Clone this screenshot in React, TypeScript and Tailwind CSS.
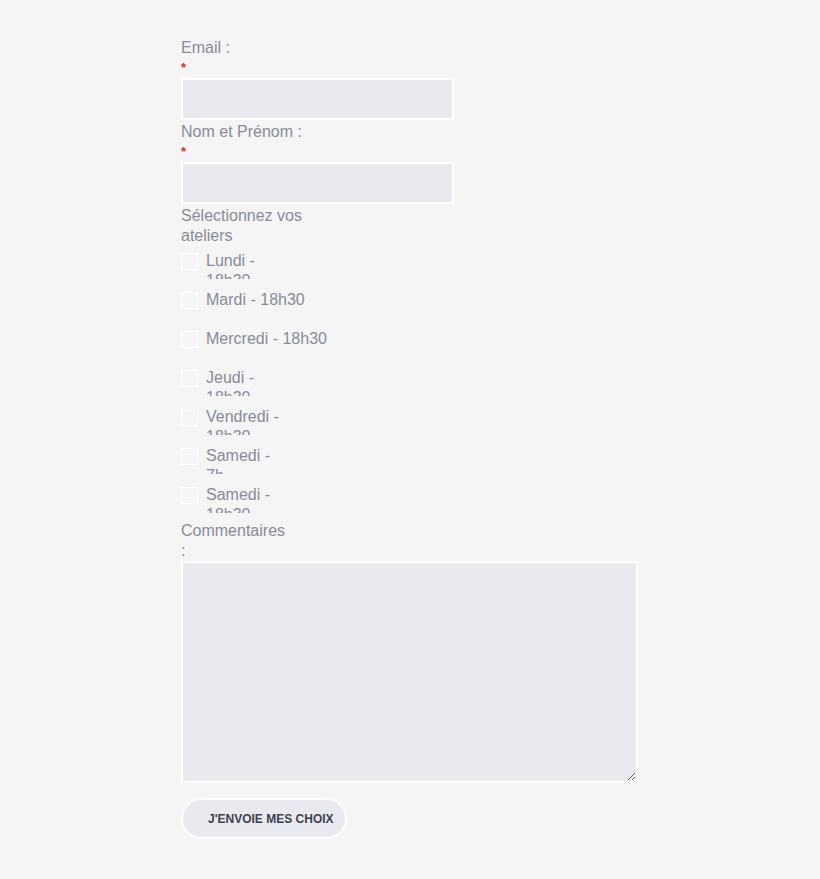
import React from "react";

type Atelier = { id: string; text: string; width: string };

const ateliers: Atelier[] = [
  { id: "lun", text: "Lundi - 18h30", width: "w-[60px]" },
  { id: "mar", text: "Mardi - 18h30", width: "w-[130px]" },
  { id: "mer", text: "Mercredi - 18h30", width: "w-[130px]" },
  { id: "jeu", text: "Jeudi - 18h30", width: "w-[60px]" },
  { id: "ven", text: "Vendredi - 18h30", width: "w-[80px]" },
  { id: "sam1", text: "Samedi - 7h", width: "w-[70px]" },
  { id: "sam2", text: "Samedi - 18h30", width: "w-[70px]" },
];

const Field = ({ label, offset }: { label: string; offset: string }) => (
  <div>
    <label className={`block leading-[20px] ${offset}`}>{label}</label>
    <span className="block h-[20px] leading-[20px] text-[13px] font-bold text-[#d0312d]">*</span>
    <input
      type="text"
      className="block h-[42px] w-[273px] border-2 border-white bg-[#e9eaef] outline-none"
    />
  </div>
);

export default function App() {
  return (
    <div className="min-h-[879px] w-full bg-[#f5f5f5] font-['Liberation_Sans',Arial,sans-serif] text-[16px] text-[#898b99]">
      <form className="ml-[181px] pt-[37px] pb-[40px]" onSubmit={(e) => e.preventDefault()}>
        <Field label="Email :" offset="pt-[1px]" />
        <Field label="Nom et Prénom :" offset="pt-[2px]" />

        <div className="mt-[2px] leading-[20px]">
          Sélectionnez vos
          <br />
          ateliers
        </div>
        <div className="mt-[5px] flex flex-col">
          {ateliers.map((item) => (
            <div key={item.id} className="flex h-[39px] items-start">
              <span className="mt-[2px] h-[17px] w-[17px] shrink-0 border border-white bg-[#f6f6f7]" />
              <span className={`ml-[8px] h-[28px] overflow-hidden leading-[20px] ${item.width}`}>
                {item.text}
              </span>
            </div>
          ))}
        </div>

        <div className="-mt-[3px] leading-[20px]">
          Commentaires
          <br />:
        </div>
        <textarea className="block h-[222px] w-[457px] border-2 border-white bg-[#e9eaef] outline-none" />

        <button
          type="submit"
          className="mt-[15px] h-[41px] rounded-full border-2 border-white bg-[#e9eaef] pl-[25px] pr-[11px] text-[12px] font-bold uppercase text-[#3d4152]"
        >
          J'envoie mes choix
        </button>
      </form>
    </div>
  );
}
